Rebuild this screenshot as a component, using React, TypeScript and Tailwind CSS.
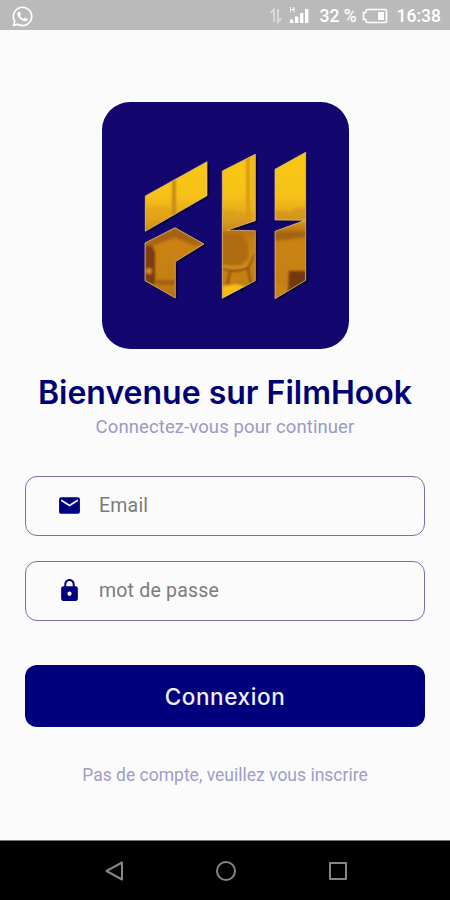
import React, { useState } from 'react';
import { FaWhatsapp } from 'react-icons/fa';
import { MdEmail, MdLock } from 'react-icons/md';

const SHAPES = [
  '43.3,94 105,59.7 105,93.7 43.3,129.3',
  '73,125.7 102,142 73.3,159.7 73.3,196 43,178.7 43,141',
  '120.3,69 153.3,52.3 153.3,118.7 125,128.2 153.3,128.7 153.3,178.7 120.3,196.3',
  '173,67.3 203.7,50.3 203.7,178.3 173,196.7 173,129.3 203,118.3 173,118',
];

function Logo() {
  return (
    <svg className="w-[247px] h-[247px] rounded-[28px] bg-[#13066f]" viewBox="0 0 247 247">
      <defs>
        <linearGradient id="gold" gradientUnits="userSpaceOnUse" x1="0" y1="50" x2="0" y2="197">
          <stop offset="0" stopColor="#f9c812" />
          <stop offset="0.3" stopColor="#f7c118" />
          <stop offset="0.46" stopColor="#dfa01a" />
          <stop offset="0.54" stopColor="#b97312" />
          <stop offset="0.62" stopColor="#ca8212" />
          <stop offset="0.88" stopColor="#c58012" />
          <stop offset="1" stopColor="#b06c12" />
        </linearGradient>
        <clipPath id="letters">
          {SHAPES.map((points) => (
            <polygon key={points} points={points} />
          ))}
        </clipPath>
        <filter id="soft" x="-20%" y="-20%" width="140%" height="140%">
          <feGaussianBlur stdDeviation="0.8" />
        </filter>
      </defs>

      {/* Drop shadow */}
      <g fill="#05022c" filter="url(#soft)" transform="translate(1.8 1.2)">
        {SHAPES.map((points) => (
          <polygon key={points} points={points} />
        ))}
      </g>

      {/* Room scene seen through the letters */}
      <g clipPath="url(#letters)">
        <rect x="40" y="48" width="168" height="152" fill="url(#gold)" />
        <g filter="url(#soft)">
          <rect x="70" y="75" width="4" height="42" fill="#c88c14" />
          <rect x="43" y="105" width="27" height="24" fill="#dda21c" opacity="0.5" />
          <rect x="144" y="50" width="4" height="67" fill="#d99c12" />
          <rect x="150" y="50" width="4" height="70" fill="#eeb516" />
          <path d="M120 110l10-3 10 4h14v9l-34 10z" fill="#d69a20" opacity="0.5" />
          <path d="M173 108l16 2 4-4h12v13h-32z" fill="#c98d20" opacity="0.55" />
          <path d="M43 141l30-15 29 16-10 2-19-9-30 12z" fill="#9c590e" opacity="0.7" />
          <path d="M43 144h7l3 6v33l-10-4z" fill="#7c3d10" />
          <circle cx="47" cy="169" r="3" fill="#d08a28" />
          <path d="M52 178h22v5H56z" fill="#a45f10" />
          <path d="M120 132h20l7 10v14l-8 7h-19z" fill="#a96310" opacity="0.75" />
          <path d="M140 131l6 11v13l-7 8" fill="none" stroke="#bd7716" strokeWidth="1.5" />
          <path d="M121 167q14 4 25-1l6-14M128 169l-3 16M146 167l3 15" fill="none" stroke="#85470f" strokeWidth="1.8" />
          <path d="M121 164q13 4 24-1l6-12" fill="none" stroke="#d69427" strokeWidth="1.5" />
          <path d="M120 184l14-2 12 3-26 13z" fill="#f5bd12" />
          <path d="M173 130h31v5l-31 4z" fill="#9f5e10" opacity="0.8" />
          <path d="M187 169h17v12l-18 9z" fill="#733710" />
          <path d="M173 181l13 2-2 8-11 6z" fill="#c98413" />
        </g>
      </g>
      <g fill="none" stroke="#e8c789" strokeWidth="0.9" strokeOpacity="0.8">
        {SHAPES.map((points) => (
          <polygon key={points} points={points} />
        ))}
      </g>
    </svg>
  );
}

function StatusBar() {
  return (
    <div className="flex h-[30px] items-center bg-[#bababa] pl-[11px] pr-[9px] pt-[2px] text-white">
      <FaWhatsapp size={23} />
      <div className="ml-auto flex items-center text-[17.5px] leading-none font-medium">
        <svg className="mr-[6px] h-[18px] w-[14px]" viewBox="0 0 14 18" fill="none" stroke="#d9d9d9" strokeWidth="2">
          <path d="M1.5 6L5 2.5V15M9 2v13l3.500-3.500" />
        </svg>
        <svg className="mr-[10px] h-[18px] w-[20px]" viewBox="0 0 20 18" fill="#fff">
          <path d="M1 12.500h3.400V16H1zM6 9.500h3.400V16H6zM11 6h3.400v10H11zM16 2h3.400v14H16z" />
          <path d="M1.500 0v5M5 0v5M1.500 2.500H5" fill="none" stroke="#fff" strokeWidth="1" />
        </svg>
        <span className="pt-px">32 %</span>
        <svg className="ml-[5px] mr-[9px] h-[16px] w-[26px]" viewBox="0 0 26 16">
          <path d="M5.500 1.500H23q1.500 0 1.500 1.500v10q0 1.500-1.500 1.500H5.500Q4 14.500 4 13v-1.500H1.500v-7H4V3q0-1.500 1.500-1.500z" fill="none" stroke="#fff" strokeWidth="1.700" />
          <path d="M16 4h6v8h-6z" fill="#fff" />
        </svg>
        <span className="pt-px">16:38</span>
      </div>
    </div>
  );
}

function Field({ icon, type, placeholder }: { icon: React.ReactNode; type: string; placeholder: string }) {
  const [value, setValue] = useState('');

  return (
    <label className="flex h-[60px] items-center rounded-xl border-[1.5px] border-[#7470ae] pl-[31px] pr-4 text-[#000080]">
      {icon}
      <input
        type={type}
        value={value}
        onChange={(e) => setValue(e.target.value)}
        placeholder={placeholder}
        className="ml-[17px] min-w-0 flex-1 bg-transparent pt-px text-[19.5px] tracking-[0.2px] text-gray-800 outline-none placeholder:text-[#7b7b7b]"
      />
    </label>
  );
}

export default function App() {
  return (
    <div className="flex h-[900px] w-[450px] flex-col overflow-hidden bg-[#fbfbfb] font-[Roboto,sans-serif]">
      <StatusBar />

      <main className="flex flex-1 flex-col px-[25px] pt-[72px]">
        <div className="flex justify-center">
          <Logo />
        </div>
        <h1 className="mt-[25px] text-center font-[Inter,sans-serif] text-[32px] leading-[38px] font-semibold whitespace-nowrap text-[#000076]">
          Bienvenue sur FilmHook
        </h1>
        <p className="mt-[3px] text-center text-[18.5px] leading-[24px] tracking-[0.1px] text-[#9c99c6]">
          Connectez-vous pour continuer
        </p>

        <form className="mt-[36.5px] flex flex-col" onSubmit={(e) => e.preventDefault()}>
          <div className="flex flex-col gap-[25px]">
            <Field icon={<MdEmail size={25} />} type="email" placeholder="Email" />
            <Field icon={<MdLock size={25} />} type="password" placeholder="mot de passe" />
          </div>
          <button className="mt-[44px] h-[62px] rounded-xl bg-[#00007d] pt-[2px] font-[Inter,sans-serif] text-[22.5px] font-medium tracking-[0.6px] text-[#eeeefc]">
            Connexion
          </button>
        </form>
        <a className="mt-[36px] text-center text-[17.5px] leading-[24px] text-[#a09dc9]">Pas de compte, veuillez vous inscrire</a>
      </main>

      <nav className="flex h-[60px] items-center justify-center gap-[88px] border-t border-[#777] bg-black pl-px text-[#858585]">
        <svg className="h-6 w-6" viewBox="0 0 24 24" fill="none" stroke="currentColor" strokeWidth="2" strokeLinejoin="round">
          <path d="M20 3.500v17L4.500 12z" />
        </svg>
        <svg className="h-6 w-6" viewBox="0 0 24 24" fill="none" stroke="currentColor" strokeWidth="2">
          <circle cx="12" cy="12" r="9" />
        </svg>
        <svg className="h-6 w-6" viewBox="0 0 24 24" fill="none" stroke="currentColor" strokeWidth="2" strokeLinejoin="round">
          <rect x="4" y="4" width="16" height="16" />
        </svg>
      </nav>
    </div>
  );
}
